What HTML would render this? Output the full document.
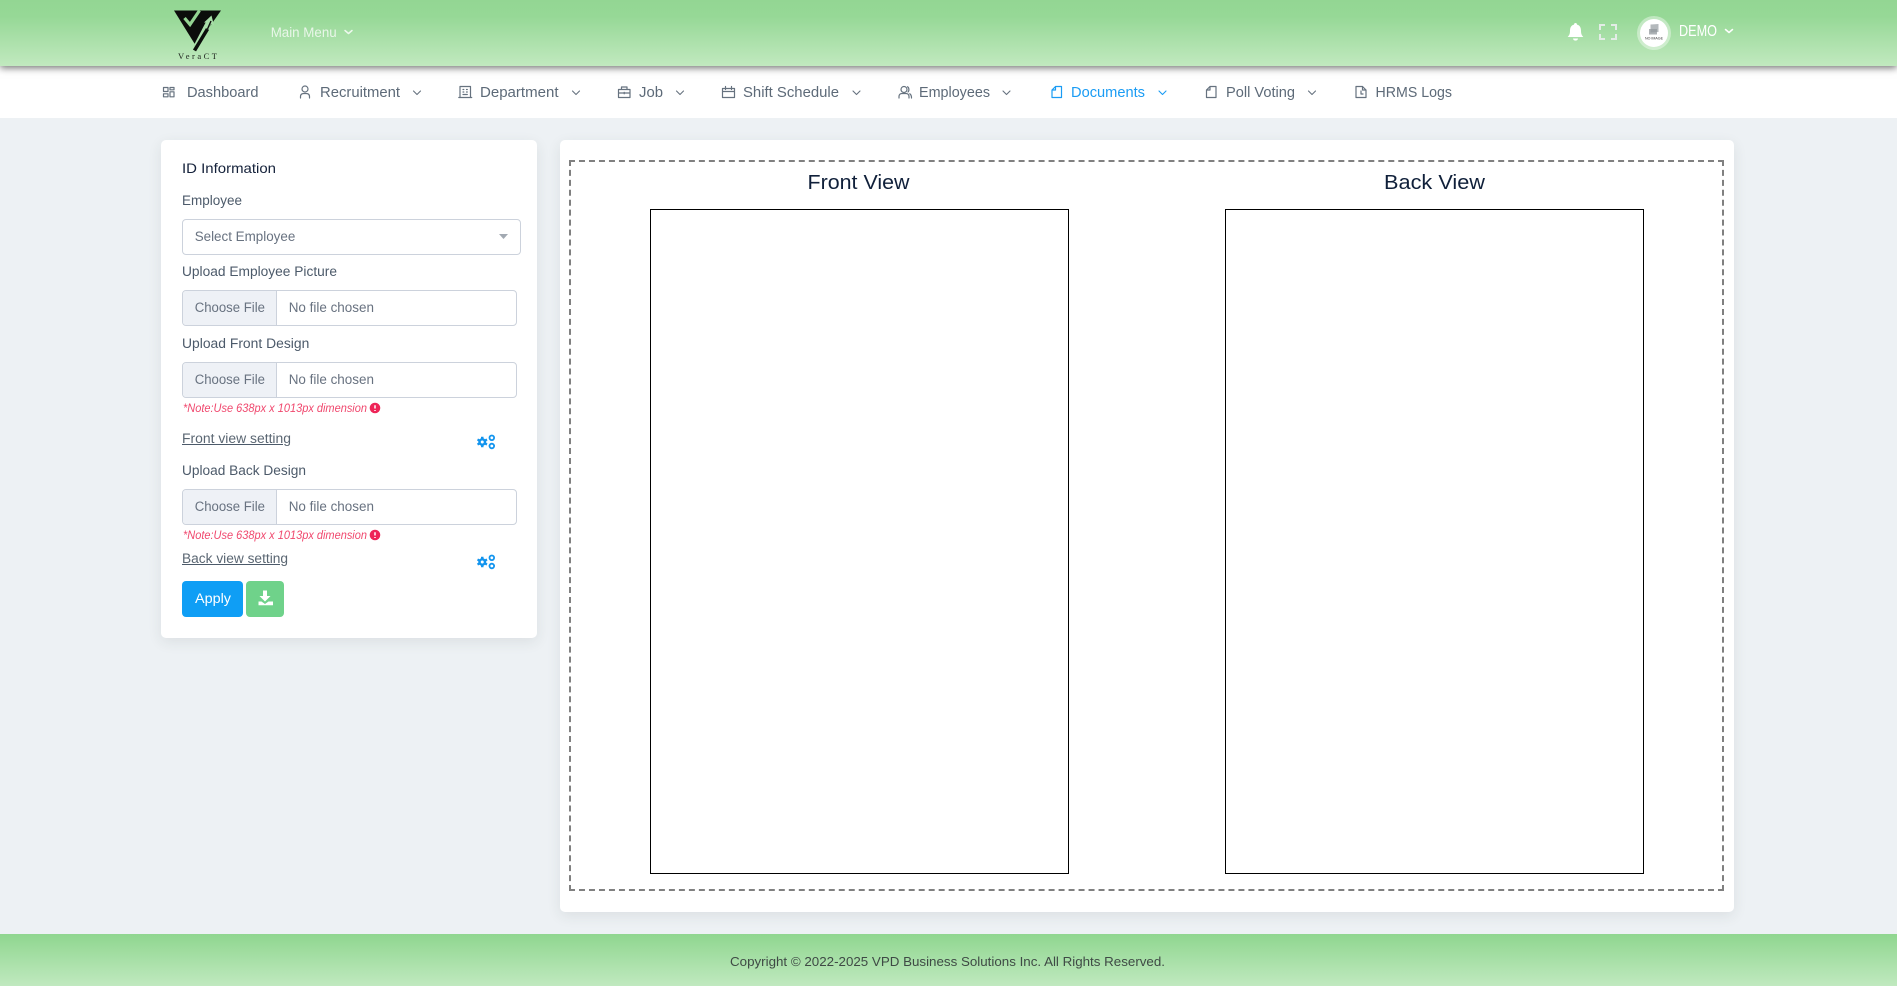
<!DOCTYPE html>
<html lang="en">
<head>
<meta charset="utf-8">
<title>VeraCT - ID Information</title>
<style>
html,body{margin:0;padding:0;width:1897px;height:986px;overflow:hidden;background:#edf1f4;}
div{position:absolute;box-sizing:border-box;}
#nav{left:0;top:66px;width:1897px;height:52px;background:#fff;}
#head{left:0;top:0;width:1897px;height:66px;background:linear-gradient(#93d693 0%,#96d896 25%,#c1e9bf 100%);box-shadow:0 2px 7px rgba(0,0,0,.55);}
#foot{left:0;top:934px;width:1897px;height:52px;background:linear-gradient(#8fd68f,#c0e9bf);}
.card{background:#fff;border-radius:5px;box-shadow:0 4px 14px rgba(40,50,60,.09);}
#c1{left:161px;top:140px;width:376px;height:498px;}
#c2{left:560px;top:140px;width:1174px;height:772px;}
#dash{left:569px;top:160px;width:1155px;height:731px;border:2px dashed #808080;}
.box{top:209px;width:419px;height:665px;border:1px solid #000;background:#fff;}
.inp{left:182px;width:335px;height:36px;border:1px solid #ccd2dc;border-radius:4px;background:#fff;overflow:hidden;}
.inp i{position:absolute;left:0;top:0;bottom:0;width:94px;background:#eef1f6;border-right:1px solid #ccd2dc;box-sizing:border-box;}
#sel{left:182px;top:219px;width:339px;height:36px;border:1px solid #ccd2dc;border-radius:4px;background:#fff;}
#apply{left:182px;top:581px;width:61px;height:36px;background:#0f9ef5;border-radius:4px;}
#dl{left:246px;top:581px;width:38px;height:36px;background:#6fd28a;border-radius:4px;}
svg{position:absolute;left:0;top:0;}
text{font-family:"Liberation Sans",Arial,sans-serif;}
.n{font-size:14.5px;fill:#5d6a78;}
.l{font-size:13.5px;fill:#4c5a6a;}
.f{font-size:13.5px;fill:#687280;}
.note{font-size:11.5px;fill:#f0486e;font-style:italic;}
.ic{fill:none;stroke:#66727f;stroke-width:1.2;stroke-linecap:round;stroke-linejoin:round;}
.ch{fill:none;stroke:#66727f;stroke-width:1.1;stroke-linecap:round;stroke-linejoin:round;}
</style>
</head>
<body>
<div id="nav"></div>
<div id="head"></div>
<div id="foot"></div>
<div class="card" id="c1"></div>
<div class="card" id="c2"></div>
<div id="dash"></div>
<div class="box" style="left:650px"></div>
<div class="box" style="left:1225px"></div>
<div id="sel"></div>
<div class="inp" style="top:290px"><i></i></div>
<div class="inp" style="top:362px"><i></i></div>
<div class="inp" style="top:489px"><i></i></div>
<div id="apply"></div>
<div id="dl"></div>

<svg width="1897" height="986" viewBox="0 0 1897 986">
  <!-- logo -->
  <path d="M174 10.500H221L196 46Z" fill="#0b0d0b"/>
  <path d="M184.500 18L190 24.500L199.500 10.500" fill="none" stroke="#93d492" stroke-width="3.200"/>
  <path d="M196 47L209.500 21" fill="none" stroke="#a8dea8" stroke-width="5.500"/>
  <path d="M211.500 15.500L204 22.500H208.500L214 25.500Z" fill="#a8dea8"/>
  <path d="M194.500 50.500L207.500 29" fill="none" stroke="#0b0d0b" stroke-width="3.600"/>
  <path d="M207.500 29L211 21" fill="none" stroke="#0b0d0b" stroke-width="1.400"/>
  <text x="178" y="59" font-size="8.500" style="font-family:'Liberation Serif',serif" fill="#1c221c" textLength="39" lengthAdjust="spacing">VeraCT</text>

  <text x="270.700" y="37" font-size="13.500" fill="#e9f6e9" textLength="66" lengthAdjust="spacingAndGlyphs">Main Menu</text>
  <path d="M345 30.500L348.500 33.500L352 30.500" fill="none" stroke="#eef8ee" stroke-width="1.500" stroke-linecap="round" stroke-linejoin="round"/>

  <!-- bell -->
  <path d="M575.500 23C576.500 23 577 23.800 577 24.600C580.500 25.500 581 28.500 581 31C581 34 582 35.500 583.300 37H567.700C569 35.500 570 34 570 31C570 28.500 570.500 25.500 574 24.600C574 23.800 574.500 23 575.500 23Z" transform="translate(1000 0)" fill="#fff"/>
  <path d="M1573 38.500H1578C1577.800 40 1576.800 40.600 1575.500 40.600C1574.200 40.600 1573.200 40 1573 38.500Z" fill="#fff"/>
  <!-- fullscreen -->
  <path d="M1600 30V25H1605M1611 25H1616V30M1616 34V39H1611M1605 39H1600V34" fill="none" stroke="#e3ece6" stroke-width="2"/>
  <!-- avatar -->
  <circle cx="1654" cy="33" r="17" fill="#fff" fill-opacity=".4"/>
  <circle cx="1654" cy="33" r="14" fill="#fff"/>
  <path d="M1650.500 24.500L1658.500 24V32L1650.500 32.500Z" fill="#b4b9bc"/>
  <path d="M1649 29H1657V34.500H1649Z" fill="#92989c" fill-opacity=".75"/>
  <text x="1645" y="39.500" font-size="3.200" fill="#333" textLength="18" lengthAdjust="spacingAndGlyphs">NO IMAGE</text>
  <text x="1679" y="36" font-size="15.500" fill="#fff" textLength="38" lengthAdjust="spacingAndGlyphs">DEMO</text>
  <path d="M1725.500 29.500L1729 32.500L1732.500 29.500" fill="none" stroke="#fff" stroke-width="1.500" stroke-linecap="round" stroke-linejoin="round"/>

  <!-- nav: dashboard -->
  <path class="ic" d="M163.500 87.500H168V91.500H163.500ZM170 87.500H174V89.800H170ZM170 91.800H174V96.800H170ZM163.500 93.800H168V96.800H163.500Z"/>
  <text class="n" x="187" y="97" textLength="71.500" lengthAdjust="spacingAndGlyphs">Dashboard</text>
  <!-- recruitment -->
  <circle class="ic" cx="305" cy="89" r="3"/><path class="ic" d="M300.500 98V96.500C300.500 94.500 302 93.500 304 93.500H306C308 93.500 309.500 94.500 309.500 96.500V98"/>
  <text class="n" x="320" y="97" textLength="80" lengthAdjust="spacingAndGlyphs">Recruitment</text>
  <path class="ch" d="M413.500 91L417 94.500L420.500 91"/>
  <!-- department -->
  <path class="ic" d="M460 86.500H470.500V97.500H460ZM458.800 97.500H471.700M463 89.500H463.800M466.500 89.500H467.300M463 92H463.800M466.500 92H467.300M463 94.500H467.300"/>
  <text class="n" x="480" y="97" textLength="78.500" lengthAdjust="spacingAndGlyphs">Department</text>
  <path class="ch" d="M572.500 91L576 94.500L579.500 91"/>
  <!-- job -->
  <path class="ic" d="M618.500 89.500H630V97.500H618.500ZM621.500 89.500V87H627V89.500M618.500 93H630M624.200 92.300V93.800"/>
  <text class="n" x="639" y="97" textLength="24" lengthAdjust="spacingAndGlyphs">Job</text>
  <path class="ch" d="M676.500 91L680 94.500L683.500 91"/>
  <!-- shift -->
  <path class="ic" d="M722.500 88.500H734.500V97.500H722.500ZM722.500 91.500H734.500M725.500 86.500V89.500M731.500 86.500V89.500"/>
  <text class="n" x="743" y="97" textLength="96" lengthAdjust="spacingAndGlyphs">Shift Schedule</text>
  <path class="ch" d="M853 91L856.500 94.500L860 91"/>
  <!-- employees -->
  <circle class="ic" cx="904" cy="89.500" r="3"/><path class="ic" d="M899 98V96.500C899 94.500 900.500 93.500 902 93.500H906C907.500 93.500 909 94.500 909 96.500V98M907.500 86.800C909 87.300 909.500 90.500 908 92M909.800 93.800C911 94.500 911.500 95.500 911.500 98"/>
  <text class="n" x="919" y="97" textLength="71" lengthAdjust="spacingAndGlyphs">Employees</text>
  <path class="ch" d="M1003 91L1006.500 94.500L1010 91"/>
  <!-- documents -->
  <path class="ic" style="stroke:#1a9cf4" d="M1055.500 86.500H1061.500V97.500H1052V90ZM1055.500 86.500V90H1052"/>
  <text class="n" x="1071" y="97" style="fill:#1a9cf4" textLength="74" lengthAdjust="spacingAndGlyphs">Documents</text>
  <path class="ch" style="stroke:#1a9cf4" d="M1159 91L1162.500 94.500L1166 91"/>
  <!-- poll -->
  <path class="ic" d="M1210 86.500H1216V97.500H1206.500V90ZM1210 86.500V90H1206.500"/>
  <text class="n" x="1226" y="97" textLength="69" lengthAdjust="spacingAndGlyphs">Poll Voting</text>
  <path class="ch" d="M1308.500 91L1312 94.500L1315.500 91"/>
  <!-- hrms -->
  <path class="ic" d="M1356 86.500H1362.500L1366 90V97.500H1356ZM1362.500 86.500V90H1366M1361 91V94H1363"/>
  <text class="n" x="1375.500" y="97" textLength="76.500" lengthAdjust="spacingAndGlyphs">HRMS Logs</text>

  <!-- left card -->
  <text x="182" y="173" font-size="14" fill="#14213a" textLength="94" lengthAdjust="spacingAndGlyphs">ID Information</text>
  <text class="l" x="182" y="205" textLength="60" lengthAdjust="spacingAndGlyphs">Employee</text>
  <text class="f" x="194.700" y="241" textLength="100.600" lengthAdjust="spacingAndGlyphs">Select Employee</text>
  <path d="M499 234H508L503.500 239Z" fill="#a2a9b2"/>

  <text class="l" x="182" y="276" textLength="155" lengthAdjust="spacingAndGlyphs">Upload Employee Picture</text>
  <text class="f" x="194.700" y="312" textLength="70.300" lengthAdjust="spacingAndGlyphs">Choose File</text>
  <text class="f" x="288.700" y="312" textLength="85.300" lengthAdjust="spacingAndGlyphs">No file chosen</text>

  <text class="l" x="182" y="348" textLength="127.300" lengthAdjust="spacingAndGlyphs">Upload Front Design</text>
  <text class="f" x="194.700" y="384" textLength="70.300" lengthAdjust="spacingAndGlyphs">Choose File</text>
  <text class="f" x="288.700" y="384" textLength="85.300" lengthAdjust="spacingAndGlyphs">No file chosen</text>

  <text class="note" x="183" y="412" textLength="184" lengthAdjust="spacingAndGlyphs">*Note:Use 638px x 1013px dimension</text>
  <circle cx="375" cy="408" r="5.300" fill="#ee2558"/><path d="M375 405.200V408.500M375 410V411" stroke="#fff" stroke-width="1.500"/>

  <text class="l" x="182" y="443" style="fill:#5a6672" textLength="109" lengthAdjust="spacingAndGlyphs">Front view setting</text>
  <path d="M182 444.500H283" stroke="#4c5a6a" stroke-width="1"/>
  <g fill="#1294ee">
    <path d="M477 443.500L478.300 442.800V441.200L477 440.500L478 438.500L479.500 439.200L481 438.200V436.800H483.500V438.200L485 439.200L486.500 438.500L487.500 440.500L486.200 441.200V442.800L487.500 443.500L486.500 445.500L485 444.800L483.500 445.800V447.200H481V445.800L479.500 444.800L478 445.500ZM482.200 440.500A1.500 1.500 0 1 0 482.300 443.500A1.500 1.500 0 1 0 482.200 440.500Z" fill-rule="evenodd"/>
    <circle cx="491.800" cy="437.800" r="2.300" fill="none" stroke="#1294ee" stroke-width="1.800"/>
    <circle cx="491.800" cy="446" r="2.300" fill="none" stroke="#1294ee" stroke-width="1.800"/>
  </g>

  <text class="l" x="182" y="475" textLength="124" lengthAdjust="spacingAndGlyphs">Upload Back Design</text>
  <text class="f" x="194.700" y="511" textLength="70.300" lengthAdjust="spacingAndGlyphs">Choose File</text>
  <text class="f" x="288.700" y="511" textLength="85.300" lengthAdjust="spacingAndGlyphs">No file chosen</text>

  <text class="note" x="183" y="539" textLength="184" lengthAdjust="spacingAndGlyphs">*Note:Use 638px x 1013px dimension</text>
  <circle cx="375" cy="535" r="5.300" fill="#ee2558"/><path d="M375 532.200V535.500M375 537V538" stroke="#fff" stroke-width="1.500"/>

  <text class="l" x="182" y="563" style="fill:#5a6672" textLength="106" lengthAdjust="spacingAndGlyphs">Back view setting</text>
  <path d="M182 564.500H280" stroke="#4c5a6a" stroke-width="1"/>
  <g fill="#1294ee" transform="translate(0 120)">
    <path d="M477 443.500L478.300 442.800V441.200L477 440.500L478 438.500L479.500 439.200L481 438.200V436.800H483.500V438.200L485 439.200L486.500 438.500L487.500 440.500L486.200 441.200V442.800L487.500 443.500L486.500 445.500L485 444.800L483.500 445.800V447.200H481V445.800L479.500 444.800L478 445.500ZM482.200 440.500A1.500 1.500 0 1 0 482.300 443.500A1.500 1.500 0 1 0 482.200 440.500Z" fill-rule="evenodd"/>
    <circle cx="491.800" cy="437.800" r="2.300" fill="none" stroke="#1294ee" stroke-width="1.800"/>
    <circle cx="491.800" cy="446" r="2.300" fill="none" stroke="#1294ee" stroke-width="1.800"/>
  </g>

  <text x="195" y="603" font-size="13.500" fill="#fff" textLength="36" lengthAdjust="spacingAndGlyphs">Apply</text>
  <path d="M263 591H267V596.500H270.500L265 602L259.500 596.500H263ZM258.500 602H261.500L265 604.500L268.500 602H273V605.800H258.500Z" transform="translate(0 -.5)" fill="#fff"/>

  <!-- views -->
  <text x="807.500" y="189" font-size="20" fill="#10203a" textLength="102" lengthAdjust="spacingAndGlyphs">Front View</text>
  <text x="1384" y="189" font-size="20" fill="#10203a" textLength="101" lengthAdjust="spacingAndGlyphs">Back View</text>

  <!-- footer -->
  <text x="730" y="966" font-size="13" fill="#3f4a45" textLength="435" lengthAdjust="spacingAndGlyphs">Copyright © 2022-2025 VPD Business Solutions Inc. All Rights Reserved.</text>
</svg>
</body>
</html>
